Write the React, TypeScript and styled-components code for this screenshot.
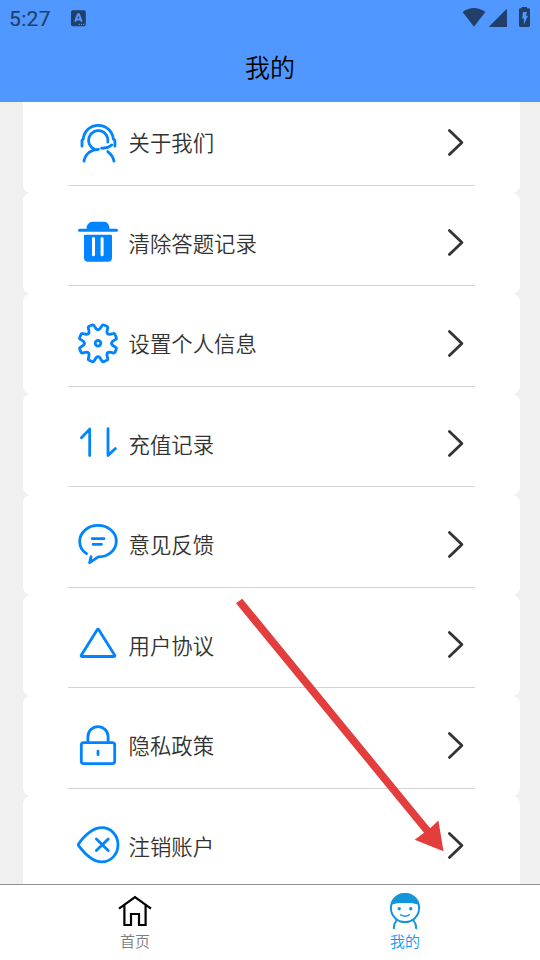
import React from 'react';
import styled, { createGlobalStyle } from 'styled-components';

const GlobalStyle = createGlobalStyle`
  * { box-sizing: border-box; }
  body { margin: 0; background: #f0f0f0; font-family: Roboto, "Noto Sans CJK SC", sans-serif; }
`;

const Screen = styled.div`
  position: relative;
  display: flex;
  flex-direction: column;
  width: 540px;
  height: 960px;
  overflow: hidden;
  background: #f0f0f0;
`;

const Header = styled.header`
  flex: none;
  height: 102px;
  background: #5098ff;
  position: relative;
  z-index: 1;
`;

const StatusBar = styled.div`
  display: flex;
  align-items: center;
  height: 36px;
  padding: 0 10px 0 9px;
  color: #213f69;
`;

const Clock = styled.span`
  width: 61px;
  font: 400 21px/36px Roboto, sans-serif;
  letter-spacing: 0.35px;
  -webkit-text-stroke: 0.15px #213f69;
  padding-top: 2px;
`;

const StatusIcons = styled.div`
  margin-left: auto;
  display: flex;
  padding-bottom: 2px;
`;

const Title = styled.h1`
  margin: 0;
  padding-top: 12px;
  text-align: center;
  font: 350 25px/36px "Noto Sans CJK SC", sans-serif;
  color: #000;
`;

const List = styled.main`
  flex: 1;
  min-height: 0;
  margin-top: -9.1px;
  padding: 0 20px 0 23px;
  overflow: hidden;
`;

const Card = styled.section`
  height: 100.5px;
  padding: 0 45px;
  border-radius: 8px;
  background: #fff;
`;

const Row = styled.div`
  display: flex;
  align-items: center;
  height: 93px;
  padding: 6px 0 0 8px;
  border-bottom: 1px solid #d2d3d6;
`;

const Label = styled.span`
  flex: 1;
  padding: 1px 0 0 8.5px;
  font: 350 21.4px/30px "Noto Sans CJK SC", sans-serif;
  color: #333;
`;

const LineIcon = styled.svg<{ $color?: string; $weight?: number }>`
  display: block;
  flex: none;
  fill: none;
  stroke: ${(p) => p.$color ?? '#0084ff'};
  stroke-width: ${(p) => p.$weight ?? 2.8};
  stroke-linecap: round;
  stroke-linejoin: round;
`;

const Chevron = styled(LineIcon)`
  margin-right: 9px;
`;

const TabBar = styled.nav`
  flex: none;
  display: grid;
  grid-template-columns: 1fr 1fr;
  height: 76px;
  border-top: 1px solid #929292;
  background: #fff;
`;

const Tab = styled.div<{ $active?: boolean }>`
  display: flex;
  flex-direction: column;
  align-items: center;
  padding-top: 6px;
  font: 350 15px/22px "Noto Sans CJK SC", sans-serif;
  color: ${(p) => (p.$active ? '#0a9cf3' : '#7c7d82')};
`;

const Pointer = styled.svg`
  position: absolute;
  left: 230px;
  top: 590px;
  z-index: 2;
  fill: #e43d3d;
`;

const polar = (r: number, deg: number) => {
  const a = (deg * Math.PI) / 180;
  return `${(22 + r * Math.cos(a)).toFixed(2)} ${(22.6 + r * Math.sin(a)).toFixed(2)}`;
};

const gearPath =
  'M' +
  Array.from({ length: 8 }, (_, i) => {
    const a = 22.5 + i * 45;
    return `${polar(14.6, a - 15)}L${polar(18, a - 10)}Q${polar(19.3, a - 9)} ${polar(19.2, a - 5)}L${polar(19.2, a + 5)}Q${polar(19.3, a + 9)} ${polar(18, a + 10)}L${polar(14.6, a + 15)}Q${polar(12.6, a + 22.5)} ${polar(14.6, a + 30)}`;
  }).join('L') +
  'Z';

const items: { label: string; icon: React.ReactNode }[] = [
  {
    label: '关于我们',
    icon: (
      <>
        <path d="M6 26.5V20.6L7.2 19.5C8 11.5 14 5.6 22.2 5.6S36.4 11.5 37.4 19.5L38.9 20.6V26.5" />
        <path d="M31.8 22.4A9.7 9.7 0 1 0 18.4 29.5Q20.3 30.3 22.5 29.7C15.5 29.6 9.2 34 8 41.5M25.6 28.5Q31.5 28.9 35.7 25.3M31.7 31.9Q37 35.8 38 41.5" />
      </>
    ),
  },
  {
    label: '清除答题记录',
    icon: (
      <g fill="#0084ff" stroke="none">
        <path d="M10.7 9V6.5Q11 4.9 14 2.6Q15 2.1 16.5 2.1H28Q29.4 2.1 30.5 2.6Q33 4.9 33.3 6.5V9H40.5A1.5 1.5 0 0 1 40.5 12H3.5A1.5 1.5 0 0 1 3.5 9Z" />
        <path d="M9 15.1H35Q36 15.1 36 16.1V38.1Q36 42.1 32 42.1H12Q8 42.1 8 38.1V16.1Q8 15.1 9 15.1Z" />
        <path fill="#fff" d="M16 18.8a1.5 1.5 0 0 1 3 0v16.3a1.5 1.5 0 0 1-3 0ZM24.6 18.8a1.5 1.5 0 0 1 3 0v16.3a1.5 1.5 0 0 1-3 0Z" />
      </g>
    ),
  },
  {
    label: '设置个人信息',
    icon: (
      <>
        <path d={gearPath} />
        <circle cx="22" cy="22.6" r="2.8" />
      </>
    ),
  },
  { label: '充值记录', icon: <path d="M5.4 17L13.7 8.4V34.8M32 8V34.8L39.4 27.9" /> },
  {
    label: '意见反馈',
    icon: (
      <>
        <path d="M10.5 32C6.2 29.2 3.7 24.7 3.7 19.8C3.7 10.8 11.8 3.7 22 3.7S40.3 10.8 40.3 19.4S32.8 35.3 22.3 35.1L13.6 41L15 35" />
        <path d="M16.2 17H28M17 22.6H25.5" />
      </>
    ),
  },
  { label: '用户协议', icon: <path d="M21.2 8Q22 6.8 22.8 8L38.7 33.5Q39.3 34.8 38 34.8H6Q4.7 34.8 5.3 33.5Z" /> },
  {
    label: '隐私政策',
    icon: (
      <>
        <rect x="5.3" y="19.9" width="33.4" height="21" rx="2.4" />
        <path d="M11.9 19.5V14A10.1 10.1 0 0 1 32.1 14V19.5M22 28.4V32" />
      </>
    ),
  },
  {
    label: '注销账户',
    icon: (
      <path d="M2.6 21.1C9.3 12 17.5 5 25.8 5C35 5 42 12.7 42 22.1S35 39.2 25.8 39.2C17.5 39.2 9.3 32 2.6 23Q1.9 22.1 2.6 21.1ZM20.4 16.3L32.2 27.9M32.2 16.3L20.4 27.9" />
    ),
  },
];

export default function App() {
  return (
    <>
      <GlobalStyle />
      <Screen>
        <Header>
          <StatusBar>
            <Clock>5:27</Clock>
            <svg width="16" height="18" viewBox="0 0 16 18">
              <rect x="1" y="1.2" width="14.8" height="16" rx="1.6" fill="#213f69" />
              <path d="M5.1 12.6L7.9 5.2H8.9L11.7 12.6M6.2 10.4H10.6" fill="none" stroke="#5098ff" strokeWidth="2" />
              <path d="M8.7 15.4H14.5" stroke="#5098ff" strokeWidth="1.1" strokeDasharray="1.2 1" />
            </svg>
            <StatusIcons>
              <svg width="68" height="20" viewBox="462 7 68 20" fill="#213f69">
                <path d="M462.6 12Q473.8 4 485.4 12L474 26.8Z" />
                <path d="M507 9.2V27H489.2V26.4L506.3 9.2Z" />
                <path d="M521.6 8.2V7H527V8.2H528.6Q530 8.2 530 9.6V25.6Q530 27 528.6 27H520.4Q519 27 519 25.6V9.6Q519 8.2 520.4 8.2Z" />
                <path fill="#5098ff" d="M523 12H527L525.9 15.7H528L523.9 24.4V18.5H522.1Z" />
              </svg>
            </StatusIcons>
          </StatusBar>
          <Title>我的</Title>
        </Header>
        <List>
          {items.map((item) => (
            <Card key={item.label}>
              <Row>
                <LineIcon width="44" height="44" viewBox="0 0.3 44 44">{item.icon}</LineIcon>
                <Label>{item.label}</Label>
                <Chevron width="20" height="30" viewBox="0 0 20 30" $color="#333">
                  <path d="M3.4 3.4L15.9 15.4L3.4 27.4" />
                </Chevron>
              </Row>
            </Card>
          ))}
        </List>
        <TabBar>
          <Tab>
            <LineIcon width="36" height="39" viewBox="117 891 36 39" $color="#000" $weight={2.2}>
              <path strokeLinecap="butt" strokeLinejoin="miter" d="M119 908.6L135 897.2L151 908.6M124.4 905V925H131V914H139V925H145.6V905" />
            </LineIcon>
            首页
          </Tab>
          <Tab $active>
            <LineIcon width="36" height="39" viewBox="387 891 36 39" $color="#1296db" $weight={2}>
              <circle cx="405" cy="908" r="14.1" />
              <path fill="#1296db" stroke="none" d="M390.8 905C392.4 897.8 397.5 893 405 893S417.6 897.8 419.2 905C415 903.1 411 902.9 405 902.9S395 903.1 390.8 905Z" />
              <g fill="#1296db" stroke="none">
                <circle cx="399.2" cy="908.7" r="1.7" />
                <circle cx="410.8" cy="908.7" r="1.7" />
              </g>
              <path strokeWidth="1.5" d="M400.8 914.9Q405 917.6 409.2 914.9" />
              <path d="M396.4 920.5Q393.6 924 393.8 928.2M413.6 920.5Q416.4 924 416.2 928.2" />
            </LineIcon>
            我的
          </Tab>
        </TabBar>
        <Pointer width="220" height="266" viewBox="230 590 220 266">
          <path d="M242.2 598.7L430.2 828.2L438.4 820.6L443.5 851.3L414.7 839.8L424 832.8L236 603.2Z" />
        </Pointer>
      </Screen>
    </>
  );
}
